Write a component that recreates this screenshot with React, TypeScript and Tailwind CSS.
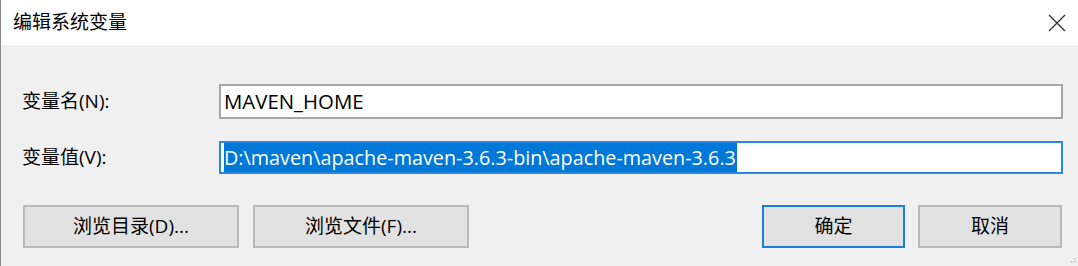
const FONT = "font-['Open_Sans','Noto_Sans_CJK_SC',sans-serif]";

function Field({
  label,
  children,
  focused,
}: {
  label: string;
  children: React.ReactNode;
  focused?: boolean;
}) {
  return (
    <div className="flex items-center">
      <div className="w-[218px] pl-[21px] text-[19px] text-black">{label}</div>
      <div
        className={`flex h-full w-[844px] items-center bg-white pl-[3px] border-2 ${
          focused ? "border-[#2a88e0]" : "border-[#a6a6a6]"
        }`}
      >
        {children}
      </div>
    </div>
  );
}

function Btn({
  children,
  width,
  focused,
}: {
  children: React.ReactNode;
  width: string;
  focused?: boolean;
}) {
  return (
    <button
      className={`flex h-[43px] items-center justify-center bg-[#e1e1e1] text-[19px] text-black border-2 ${width} ${
        focused ? "border-[#1c7fdb]" : "border-[#b9b9b9]"
      }`}
    >
      {children}
    </button>
  );
}

export default function App() {
  return (
    <div
      className={`relative flex h-[266px] w-[1078px] flex-col border-l border-[#8a8a8a] ${FONT}`}
    >
      <div className="flex h-[45px] items-center justify-between bg-white pl-[12px] pr-[12px]">
        <span className="text-[19px] text-black">编辑系统变量</span>
        <svg width="18" height="18" viewBox="0 0 18 18">
          <path d="M1 1 L17 17 M17 1 L1 17" stroke="#333" strokeWidth="1.3" fill="none" />
        </svg>
      </div>

      <div className="flex flex-1 flex-col bg-[#f0f0f0]">
        <div className="mt-[39px] h-[36px]">
          <Field label="变量名(N):">
            <span className="text-[20.4px] text-black">MAVEN_HOME</span>
          </Field>
        </div>
        <div className="mt-[21px] h-[37px]">
          <Field label="变量值(V):" focused>
            <span className="h-[29px] bg-[#0078d7] pr-[1px] text-[19.8px] leading-[29px] text-white">
              D:\maven\apache-maven-3.6.3-bin\apache-maven-3.6.3
            </span>
          </Field>
        </div>

        <div className="mt-[27px] flex items-center pl-[22px]">
          <div className="flex gap-[14px]">
            <Btn width="w-[216px]">浏览目录(D)...</Btn>
            <Btn width="w-[216px]">浏览文件(F)...</Btn>
          </div>
          <div className="ml-auto mr-[16px] flex gap-[13px]">
            <Btn width="w-[143px]" focused>
              确定
            </Btn>
            <Btn width="w-[144px]">取消</Btn>
          </div>
        </div>
      </div>

      <svg className="absolute bottom-[2px] right-[2px]" width="8" height="8" viewBox="0 0 8 8">
        <rect x="6" y="2" width="1.5" height="1.5" fill="#bbb" />
        <rect x="3" y="5" width="1.5" height="1.5" fill="#bbb" />
        <rect x="6" y="5" width="1.5" height="1.5" fill="#bbb" />
      </svg>
    </div>
  );
}
